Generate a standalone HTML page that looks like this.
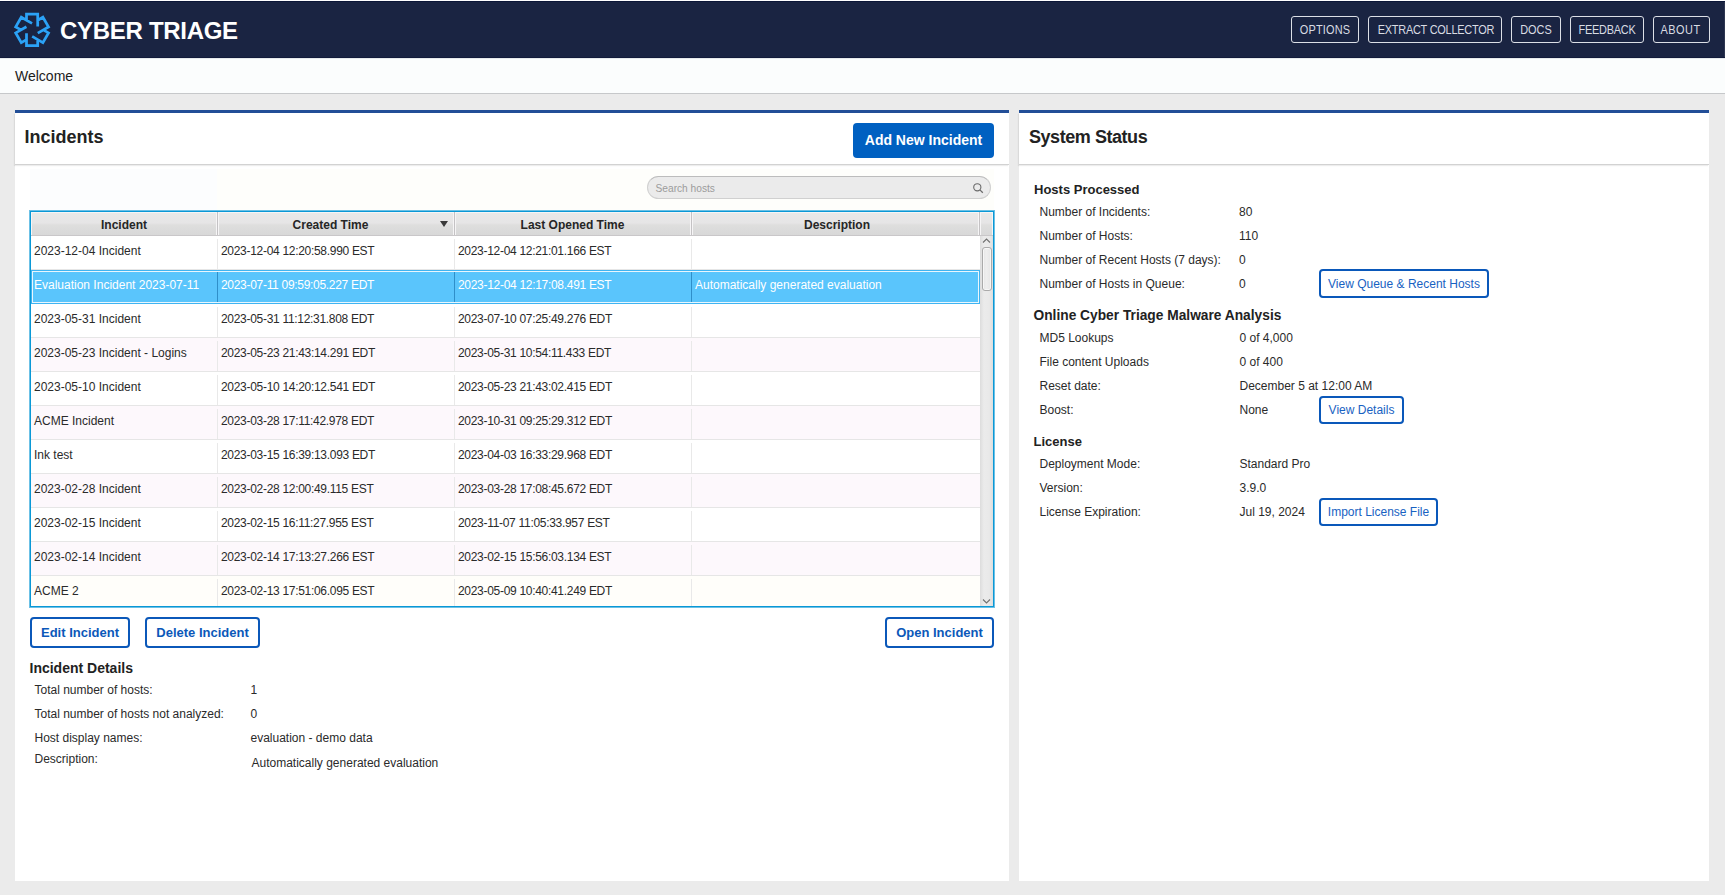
<!DOCTYPE html>
<html><head><meta charset="utf-8">
<style>
*{box-sizing:border-box;margin:0;padding:0}
html,body{width:1725px;height:895px;overflow:hidden}
body{position:relative;background:#ebebeb;font-family:"Liberation Sans",sans-serif;color:#222}
.abs{position:absolute}
.t{position:absolute;white-space:nowrap;line-height:1}
</style></head>
<body>
<div class="abs" style="left:0px;top:0px;width:1725px;height:1px;background:#ffffff"></div>
<div class="abs" style="left:0px;top:1px;width:1725px;height:57px;background:#1a2442;border-top:1px solid #0b1637;border-bottom:1px solid #111a3a"></div>
<div class="abs" style="left:1724px;top:2px;width:1px;height:55px;background:#2e3651"></div>
<svg class="abs" style="left:0;top:0" width="60" height="60" viewBox="0 0 60 60"><path d="M26.50 20.20 L26.50 14.20 L37.70 14.20 L37.70 26.60 M37.70 20.20 L42.90 17.20 L48.50 26.90 L37.76 33.10 M43.30 29.90 L48.50 32.90 L42.90 42.60 L32.16 36.40 M37.70 39.60 L37.70 45.60 L26.50 45.60 L26.50 33.20 M26.50 39.60 L21.30 42.60 L15.70 32.90 L26.44 26.70 M20.90 29.90 L15.70 26.90 L21.30 17.20 L32.04 23.40" fill="none" stroke="#2ba2f6" stroke-width="2.75" stroke-linejoin="miter" stroke-linecap="butt"/></svg>
<div class="t" style="left:60.00px;top:18.69px;font-size:24px;font-weight:700;color:#ffffff;letter-spacing:-0.3px;">CYBER TRIAGE</div>
<div class="abs" style="left:1291px;top:16px;width:68px;height:27px;border:1px solid #dcdfe6;border-radius:3px"></div>
<div class="t" style="left:1290.5px;width:68.0px;text-align:center;top:22.80px;font-size:13px;color:#d9dce3;letter-spacing:0.25px;transform:scaleX(0.84);transform-origin:50% 50%;">OPTIONS</div>
<div class="abs" style="left:1368px;top:16px;width:134px;height:27px;border:1px solid #dcdfe6;border-radius:3px"></div>
<div class="t" style="left:1366.5px;width:134.0px;text-align:center;top:22.80px;font-size:13px;color:#d9dce3;letter-spacing:-0.28px;transform:scaleX(0.84);transform-origin:50% 50%;">EXTRACT COLLECTOR</div>
<div class="abs" style="left:1511px;top:16px;width:50px;height:27px;border:1px solid #dcdfe6;border-radius:3px"></div>
<div class="t" style="left:1510.5px;width:50.0px;text-align:center;top:22.80px;font-size:13px;color:#d9dce3;transform:scaleX(0.84);transform-origin:50% 50%;">DOCS</div>
<div class="abs" style="left:1570px;top:16px;width:74px;height:27px;border:1px solid #dcdfe6;border-radius:3px"></div>
<div class="t" style="left:1569.5px;width:74.0px;text-align:center;top:22.80px;font-size:13px;color:#d9dce3;letter-spacing:-0.3px;transform:scaleX(0.84);transform-origin:50% 50%;">FEEDBACK</div>
<div class="abs" style="left:1653px;top:16px;width:57px;height:27px;border:1px solid #dcdfe6;border-radius:3px"></div>
<div class="t" style="left:1652.0px;width:57.0px;text-align:center;top:22.80px;font-size:13px;color:#d9dce3;letter-spacing:0.6px;transform:scaleX(0.84);transform-origin:50% 50%;">ABOUT</div>
<div class="abs" style="left:0px;top:58px;width:1725px;height:36px;background:#fbfdfd;border-top:1px solid #e6e9eb;border-bottom:1px solid #c6c8ca"></div>
<div class="t" style="left:15.00px;top:69.25px;font-size:14px;color:#1c1c1c;">Welcome</div>
<div class="abs" style="left:15px;top:110px;width:994px;height:771px;background:#ffffff;border-top:3px solid #224e97"></div>
<div class="abs" style="left:15px;top:113px;width:994px;height:52px;background:#ffffff;border-bottom:1px solid #d2d2d2;box-shadow:-1px 1px 1px rgba(0,0,0,0.07)"></div>
<div class="abs" style="left:1019px;top:110px;width:690px;height:771px;background:#ffffff;border-top:3px solid #224e97"></div>
<div class="abs" style="left:1019px;top:113px;width:690px;height:52px;background:#ffffff;border-bottom:1px solid #d2d2d2;box-shadow:-1px 1px 1px rgba(0,0,0,0.07)"></div>
<div class="t" style="left:24.50px;top:127.76px;font-size:18px;font-weight:700;color:#222;">Incidents</div>
<div class="t" style="left:1029.00px;top:127.76px;font-size:18px;font-weight:700;color:#222;letter-spacing:-0.45px;">System Status</div>
<div class="abs" style="left:853px;top:123px;width:141px;height:35px;background:#0060c1;border-radius:4px"></div>
<div class="t" style="left:853px;width:141px;text-align:center;top:133.15px;font-size:14px;font-weight:700;color:#ffffff;">Add New Incident</div>
<div class="abs" style="left:30px;top:169px;width:964px;height:42px;background:#fefefb"></div>
<div class="abs" style="left:30px;top:169px;width:187px;height:42px;background:#fcfdfe"></div>
<div class="abs" style="left:647px;top:176px;width:344px;height:23px;background:#ebebeb;border:1px solid #d0d0d0;border-top-color:#bcbcbc;border-radius:11.5px"></div>
<div class="t" style="left:655.50px;top:184.37px;font-size:10.2px;color:#9c9c9c;">Search hosts</div>
<svg class="abs" style="left:972px;top:182px" width="13" height="13" viewBox="0 0 13 13"><circle cx="5.3" cy="5.3" r="3.6" fill="none" stroke="#6a6a6a" stroke-width="1.1"/><path d="M7.9 7.9 L10.8 10.8" stroke="#6a6a6a" stroke-width="1.3"/></svg>
<div class="abs" style="left:30px;top:211px;width:964px;height:396px;background:#fff;border:1px solid #0a98d6;box-shadow:0 0 0 1px rgba(10,152,214,0.6)"></div>
<div class="abs" style="left:31px;top:212px;width:962px;height:24px;background:#f6f5f6;border-bottom:1px solid #c9c7c9"></div>
<div class="abs" style="left:32px;top:213px;width:184px;height:22px;background:linear-gradient(#e9e9e8,#e6e5e6 45%,#dededd 55%,#d8d8d8)"></div>
<div class="abs" style="left:219px;top:213px;width:234px;height:22px;background:linear-gradient(#e9e9e8,#e6e5e6 45%,#dededd 55%,#d8d8d8)"></div>
<div class="abs" style="left:456px;top:213px;width:234px;height:22px;background:linear-gradient(#e9e9e8,#e6e5e6 45%,#dededd 55%,#d8d8d8)"></div>
<div class="abs" style="left:693px;top:213px;width:285px;height:22px;background:linear-gradient(#e9e9e8,#e6e5e6 45%,#dededd 55%,#d8d8d8)"></div>
<div class="abs" style="left:981px;top:213px;width:11px;height:22px;background:linear-gradient(#e9e9e8,#e6e5e6 45%,#dededd 55%,#d8d8d8)"></div>
<div class="abs" style="left:217px;top:212px;width:1px;height:23px;background:#c4c2c4"></div>
<div class="abs" style="left:454px;top:212px;width:1px;height:23px;background:#c4c2c4"></div>
<div class="abs" style="left:691px;top:212px;width:1px;height:23px;background:#c4c2c4"></div>
<div class="abs" style="left:979px;top:212px;width:1px;height:23px;background:#c4c2c4"></div>
<div class="t" style="left:31px;width:186px;text-align:center;top:218.84px;font-size:12px;font-weight:700;color:#262626;">Incident</div>
<div class="t" style="left:212px;width:237px;text-align:center;top:218.84px;font-size:12px;font-weight:700;color:#262626;">Created Time</div>
<div class="t" style="left:454px;width:237px;text-align:center;top:218.84px;font-size:12px;font-weight:700;color:#262626;">Last Opened Time</div>
<div class="t" style="left:693px;width:288px;text-align:center;top:218.84px;font-size:12px;font-weight:700;color:#262626;">Description</div>
<svg class="abs" style="left:439px;top:220px" width="10" height="8" viewBox="0 0 10 8"><path d="M1 1 L9 1 L5 7 Z" fill="#3a3a3a"/></svg>
<div class="abs" style="left:31px;top:236px;width:949px;height:370px;overflow:hidden">
<div class="abs" style="left:0;top:0px;width:949px;height:34px;background:#ffffff;border-bottom:1px solid #e6e6e6"></div>
<div class="abs" style="left:186px;top:3px;width:1px;height:30px;background:#e9e9e9"></div>
<div class="abs" style="left:423px;top:3px;width:1px;height:30px;background:#e9e9e9"></div>
<div class="abs" style="left:660px;top:3px;width:1px;height:30px;background:#e9e9e9"></div>
<div class="t" style="left:3px;top:8.84px;font-size:12px;color:#2a2a2a;">2023-12-04 Incident</div>
<div class="t" style="left:190px;top:8.84px;font-size:12px;color:#2a2a2a;letter-spacing:-0.3px;">2023-12-04 12:20:58.990 EST</div>
<div class="t" style="left:427px;top:8.84px;font-size:12px;color:#2a2a2a;letter-spacing:-0.3px;">2023-12-04 12:21:01.166 EST</div>
<div class="abs" style="left:0;top:34px;width:949px;height:34px;background:#5ac5fc;border:1px solid #3fb4f2;box-shadow:inset 0 0 0 1px #eaf6fd"></div>
<div class="abs" style="left:186px;top:36px;width:1px;height:30px;background:#2f8fc9"></div>
<div class="abs" style="left:423px;top:36px;width:1px;height:30px;background:#2f8fc9"></div>
<div class="abs" style="left:660px;top:36px;width:1px;height:30px;background:#2f8fc9"></div>
<div class="t" style="left:3px;top:42.84px;font-size:12px;color:#ffffff;">Evaluation Incident 2023-07-11</div>
<div class="t" style="left:190px;top:42.84px;font-size:12px;color:#ffffff;letter-spacing:-0.3px;">2023-07-11 09:59:05.227 EDT</div>
<div class="t" style="left:427px;top:42.84px;font-size:12px;color:#ffffff;letter-spacing:-0.3px;">2023-12-04 12:17:08.491 EST</div>
<div class="t" style="left:664px;top:42.84px;font-size:12px;color:#ffffff;">Automatically generated evaluation</div>
<div class="abs" style="left:0;top:68px;width:949px;height:34px;background:#ffffff;border-bottom:1px solid #e6e6e6"></div>
<div class="abs" style="left:186px;top:71px;width:1px;height:30px;background:#e9e9e9"></div>
<div class="abs" style="left:423px;top:71px;width:1px;height:30px;background:#e9e9e9"></div>
<div class="abs" style="left:660px;top:71px;width:1px;height:30px;background:#e9e9e9"></div>
<div class="t" style="left:3px;top:76.84px;font-size:12px;color:#2a2a2a;">2023-05-31 Incident</div>
<div class="t" style="left:190px;top:76.84px;font-size:12px;color:#2a2a2a;letter-spacing:-0.3px;">2023-05-31 11:12:31.808 EDT</div>
<div class="t" style="left:427px;top:76.84px;font-size:12px;color:#2a2a2a;letter-spacing:-0.3px;">2023-07-10 07:25:49.276 EDT</div>
<div class="abs" style="left:0;top:102px;width:949px;height:34px;background:#fdf8fc;border-bottom:1px solid #e6e6e6"></div>
<div class="abs" style="left:186px;top:105px;width:1px;height:30px;background:#e9e9e9"></div>
<div class="abs" style="left:423px;top:105px;width:1px;height:30px;background:#e9e9e9"></div>
<div class="abs" style="left:660px;top:105px;width:1px;height:30px;background:#e9e9e9"></div>
<div class="t" style="left:3px;top:110.84px;font-size:12px;color:#2a2a2a;">2023-05-23 Incident - Logins</div>
<div class="t" style="left:190px;top:110.84px;font-size:12px;color:#2a2a2a;letter-spacing:-0.3px;">2023-05-23 21:43:14.291 EDT</div>
<div class="t" style="left:427px;top:110.84px;font-size:12px;color:#2a2a2a;letter-spacing:-0.3px;">2023-05-31 10:54:11.433 EDT</div>
<div class="abs" style="left:0;top:136px;width:949px;height:34px;background:#ffffff;border-bottom:1px solid #e6e6e6"></div>
<div class="abs" style="left:186px;top:139px;width:1px;height:30px;background:#e9e9e9"></div>
<div class="abs" style="left:423px;top:139px;width:1px;height:30px;background:#e9e9e9"></div>
<div class="abs" style="left:660px;top:139px;width:1px;height:30px;background:#e9e9e9"></div>
<div class="t" style="left:3px;top:144.84px;font-size:12px;color:#2a2a2a;">2023-05-10 Incident</div>
<div class="t" style="left:190px;top:144.84px;font-size:12px;color:#2a2a2a;letter-spacing:-0.3px;">2023-05-10 14:20:12.541 EDT</div>
<div class="t" style="left:427px;top:144.84px;font-size:12px;color:#2a2a2a;letter-spacing:-0.3px;">2023-05-23 21:43:02.415 EDT</div>
<div class="abs" style="left:0;top:170px;width:949px;height:34px;background:#fdf8fc;border-bottom:1px solid #e6e6e6"></div>
<div class="abs" style="left:186px;top:173px;width:1px;height:30px;background:#e9e9e9"></div>
<div class="abs" style="left:423px;top:173px;width:1px;height:30px;background:#e9e9e9"></div>
<div class="abs" style="left:660px;top:173px;width:1px;height:30px;background:#e9e9e9"></div>
<div class="t" style="left:3px;top:178.84px;font-size:12px;color:#2a2a2a;">ACME Incident</div>
<div class="t" style="left:190px;top:178.84px;font-size:12px;color:#2a2a2a;letter-spacing:-0.3px;">2023-03-28 17:11:42.978 EDT</div>
<div class="t" style="left:427px;top:178.84px;font-size:12px;color:#2a2a2a;letter-spacing:-0.3px;">2023-10-31 09:25:29.312 EDT</div>
<div class="abs" style="left:0;top:204px;width:949px;height:34px;background:#ffffff;border-bottom:1px solid #e6e6e6"></div>
<div class="abs" style="left:186px;top:207px;width:1px;height:30px;background:#e9e9e9"></div>
<div class="abs" style="left:423px;top:207px;width:1px;height:30px;background:#e9e9e9"></div>
<div class="abs" style="left:660px;top:207px;width:1px;height:30px;background:#e9e9e9"></div>
<div class="t" style="left:3px;top:212.84px;font-size:12px;color:#2a2a2a;">Ink test</div>
<div class="t" style="left:190px;top:212.84px;font-size:12px;color:#2a2a2a;letter-spacing:-0.3px;">2023-03-15 16:39:13.093 EDT</div>
<div class="t" style="left:427px;top:212.84px;font-size:12px;color:#2a2a2a;letter-spacing:-0.3px;">2023-04-03 16:33:29.968 EDT</div>
<div class="abs" style="left:0;top:238px;width:949px;height:34px;background:#fdf8fc;border-bottom:1px solid #e6e6e6"></div>
<div class="abs" style="left:186px;top:241px;width:1px;height:30px;background:#e9e9e9"></div>
<div class="abs" style="left:423px;top:241px;width:1px;height:30px;background:#e9e9e9"></div>
<div class="abs" style="left:660px;top:241px;width:1px;height:30px;background:#e9e9e9"></div>
<div class="t" style="left:3px;top:246.84px;font-size:12px;color:#2a2a2a;">2023-02-28 Incident</div>
<div class="t" style="left:190px;top:246.84px;font-size:12px;color:#2a2a2a;letter-spacing:-0.3px;">2023-02-28 12:00:49.115 EST</div>
<div class="t" style="left:427px;top:246.84px;font-size:12px;color:#2a2a2a;letter-spacing:-0.3px;">2023-03-28 17:08:45.672 EDT</div>
<div class="abs" style="left:0;top:272px;width:949px;height:34px;background:#ffffff;border-bottom:1px solid #e6e6e6"></div>
<div class="abs" style="left:186px;top:275px;width:1px;height:30px;background:#e9e9e9"></div>
<div class="abs" style="left:423px;top:275px;width:1px;height:30px;background:#e9e9e9"></div>
<div class="abs" style="left:660px;top:275px;width:1px;height:30px;background:#e9e9e9"></div>
<div class="t" style="left:3px;top:280.84px;font-size:12px;color:#2a2a2a;">2023-02-15 Incident</div>
<div class="t" style="left:190px;top:280.84px;font-size:12px;color:#2a2a2a;letter-spacing:-0.3px;">2023-02-15 16:11:27.955 EST</div>
<div class="t" style="left:427px;top:280.84px;font-size:12px;color:#2a2a2a;letter-spacing:-0.3px;">2023-11-07 11:05:33.957 EST</div>
<div class="abs" style="left:0;top:306px;width:949px;height:34px;background:#fdf8fc;border-bottom:1px solid #e6e6e6"></div>
<div class="abs" style="left:186px;top:309px;width:1px;height:30px;background:#e9e9e9"></div>
<div class="abs" style="left:423px;top:309px;width:1px;height:30px;background:#e9e9e9"></div>
<div class="abs" style="left:660px;top:309px;width:1px;height:30px;background:#e9e9e9"></div>
<div class="t" style="left:3px;top:314.84px;font-size:12px;color:#2a2a2a;">2023-02-14 Incident</div>
<div class="t" style="left:190px;top:314.84px;font-size:12px;color:#2a2a2a;letter-spacing:-0.3px;">2023-02-14 17:13:27.266 EST</div>
<div class="t" style="left:427px;top:314.84px;font-size:12px;color:#2a2a2a;letter-spacing:-0.3px;">2023-02-15 15:56:03.134 EST</div>
<div class="abs" style="left:0;top:340px;width:949px;height:34px;background:#fffefa;border-bottom:1px solid #e6e6e6"></div>
<div class="abs" style="left:186px;top:343px;width:1px;height:30px;background:#e9e9e9"></div>
<div class="abs" style="left:423px;top:343px;width:1px;height:30px;background:#e9e9e9"></div>
<div class="abs" style="left:660px;top:343px;width:1px;height:30px;background:#e9e9e9"></div>
<div class="t" style="left:3px;top:348.84px;font-size:12px;color:#2a2a2a;">ACME 2</div>
<div class="t" style="left:190px;top:348.84px;font-size:12px;color:#2a2a2a;letter-spacing:-0.3px;">2023-02-13 17:51:06.095 EST</div>
<div class="t" style="left:427px;top:348.84px;font-size:12px;color:#2a2a2a;letter-spacing:-0.3px;">2023-05-09 10:40:41.249 EDT</div>
</div>
<div class="abs" style="left:980px;top:236px;width:13px;height:370px;background:linear-gradient(90deg,#dcdcdc,#ebebeb 30%,#e9e9e9 70%,#dedede)"></div>
<div class="abs" style="left:982px;top:247px;width:10px;height:44px;background:linear-gradient(90deg,#e4e4e4,#efefef 40%,#e6e6e6);border:1px solid #aaaaaa;border-radius:3px;box-shadow:inset 0 0 0 1px #f7f7f7"></div>
<svg class="abs" style="left:980px;top:236px" width="13" height="10" viewBox="0 0 13 10"><path d="M3 6.5 L6.5 3 L10 6.5" fill="none" stroke="#707070" stroke-width="1.1"/></svg>
<svg class="abs" style="left:980px;top:596px" width="13" height="10" viewBox="0 0 13 10"><path d="M3 3.5 L6.5 7 L10 3.5" fill="none" stroke="#707070" stroke-width="1.1"/></svg>
<div class="abs" style="left:30px;top:617px;width:100px;height:31px;background:#fff;border:2px solid #0b58b9;border-radius:4px"></div>
<div class="t" style="left:30px;width:100px;text-align:center;top:626.00px;font-size:13px;font-weight:700;color:#0b58b9;">Edit Incident</div>
<div class="abs" style="left:145px;top:617px;width:115px;height:31px;background:#fff;border:2px solid #0b58b9;border-radius:4px"></div>
<div class="t" style="left:145px;width:115px;text-align:center;top:626.00px;font-size:13px;font-weight:700;color:#0b58b9;">Delete Incident</div>
<div class="abs" style="left:885px;top:617px;width:109px;height:31px;background:#fff;border:2px solid #0b58b9;border-radius:4px"></div>
<div class="t" style="left:885px;width:109px;text-align:center;top:626.00px;font-size:13px;font-weight:700;color:#0b58b9;">Open Incident</div>
<div class="t" style="left:29.50px;top:660.85px;font-size:14px;font-weight:700;color:#222;">Incident Details</div>
<div class="t" style="left:34.50px;top:684.24px;font-size:12px;color:#2a2a2a;">Total number of hosts:</div>
<div class="t" style="left:250.50px;top:684.24px;font-size:12px;color:#2a2a2a;">1</div>
<div class="t" style="left:34.50px;top:707.94px;font-size:12px;color:#2a2a2a;">Total number of hosts not analyzed:</div>
<div class="t" style="left:250.50px;top:707.94px;font-size:12px;color:#2a2a2a;">0</div>
<div class="t" style="left:34.50px;top:732.14px;font-size:12px;color:#2a2a2a;">Host display names:</div>
<div class="t" style="left:250.50px;top:732.14px;font-size:12px;color:#2a2a2a;">evaluation - demo data</div>
<div class="t" style="left:34.50px;top:753.14px;font-size:12px;color:#2a2a2a;">Description:</div>
<div class="t" style="left:251.50px;top:756.94px;font-size:12px;color:#2a2a2a;">Automatically generated evaluation</div>
<div class="t" style="left:1034.00px;top:183.00px;font-size:13px;font-weight:700;color:#222;">Hosts Processed</div>
<div class="t" style="left:1039.50px;top:206.24px;font-size:12px;color:#2a2a2a;">Number of Incidents:</div>
<div class="t" style="left:1239.00px;top:206.24px;font-size:12px;color:#2a2a2a;">80</div>
<div class="t" style="left:1039.50px;top:230.04px;font-size:12px;color:#2a2a2a;">Number of Hosts:</div>
<div class="t" style="left:1239.00px;top:230.04px;font-size:12px;color:#2a2a2a;">110</div>
<div class="t" style="left:1039.50px;top:253.84px;font-size:12px;color:#2a2a2a;">Number of Recent Hosts (7 days):</div>
<div class="t" style="left:1239.00px;top:253.84px;font-size:12px;color:#2a2a2a;">0</div>
<div class="t" style="left:1039.50px;top:278.04px;font-size:12px;color:#2a2a2a;">Number of Hosts in Queue:</div>
<div class="t" style="left:1239.00px;top:278.04px;font-size:12px;color:#2a2a2a;">0</div>
<div class="abs" style="left:1319px;top:269px;width:170px;height:29px;background:#fff;border:2px solid #0a58ba;border-radius:4px"></div>
<div class="t" style="left:1319px;width:170px;text-align:center;top:278.04px;font-size:12px;color:#1862c2;">View Queue &amp; Recent Hosts</div>
<div class="t" style="left:1033.50px;top:309.36px;font-size:13.75px;font-weight:700;color:#222;">Online Cyber Triage Malware Analysis</div>
<div class="t" style="left:1039.50px;top:332.44px;font-size:12px;color:#2a2a2a;">MD5 Lookups</div>
<div class="t" style="left:1239.50px;top:332.44px;font-size:12px;color:#2a2a2a;">0 of 4,000</div>
<div class="t" style="left:1039.50px;top:356.04px;font-size:12px;color:#2a2a2a;">File content Uploads</div>
<div class="t" style="left:1239.50px;top:356.04px;font-size:12px;color:#2a2a2a;">0 of 400</div>
<div class="t" style="left:1039.50px;top:379.84px;font-size:12px;color:#2a2a2a;">Reset date:</div>
<div class="t" style="left:1239.50px;top:379.84px;font-size:12px;color:#2a2a2a;">December 5 at 12:00 AM</div>
<div class="t" style="left:1039.50px;top:403.84px;font-size:12px;color:#2a2a2a;">Boost:</div>
<div class="t" style="left:1239.50px;top:403.84px;font-size:12px;color:#2a2a2a;">None</div>
<div class="abs" style="left:1319px;top:396px;width:85px;height:28px;background:#fff;border:2px solid #0a58ba;border-radius:4px"></div>
<div class="t" style="left:1319px;width:85px;text-align:center;top:403.84px;font-size:12px;color:#1862c2;">View Details</div>
<div class="t" style="left:1033.50px;top:435.00px;font-size:13px;font-weight:700;color:#222;">License</div>
<div class="t" style="left:1039.50px;top:458.24px;font-size:12px;color:#2a2a2a;">Deployment Mode:</div>
<div class="t" style="left:1239.50px;top:458.24px;font-size:12px;color:#2a2a2a;">Standard Pro</div>
<div class="t" style="left:1039.50px;top:482.14px;font-size:12px;color:#2a2a2a;">Version:</div>
<div class="t" style="left:1239.50px;top:482.14px;font-size:12px;color:#2a2a2a;">3.9.0</div>
<div class="t" style="left:1039.50px;top:506.24px;font-size:12px;color:#2a2a2a;">License Expiration:</div>
<div class="t" style="left:1239.50px;top:506.24px;font-size:12px;color:#2a2a2a;">Jul 19, 2024</div>
<div class="abs" style="left:1319px;top:498px;width:119px;height:28px;background:#fff;border:2px solid #0a58ba;border-radius:4px"></div>
<div class="t" style="left:1319px;width:119px;text-align:center;top:506.24px;font-size:12px;color:#1862c2;">Import License File</div>
</body></html>
